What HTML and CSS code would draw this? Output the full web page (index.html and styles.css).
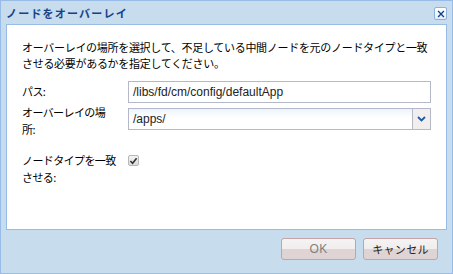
FILE: index.html
```html
<!DOCTYPE html>
<html lang="ja">
<head>
<meta charset="utf-8">
<link rel="stylesheet" href="styles.css">
</head>
<body>
<div class="dialog">
  <div class="titlebar">
    <span class="title">ノードをオーバーレイ</span>
    <span class="close"><svg width="12" height="12" viewBox="0 0 12 12"><path d="M2.5 2.5 L9.5 9.5 M9.5 2.5 L2.5 9.5" stroke="#15428b" stroke-width="1.6" fill="none"/></svg></span>
  </div>
  <div class="panel">
    <p class="desc">オーバーレイの場所を選択して、不足している中間ノードを元のノードタイプと一致させる必要があるかを指定してください。</p>
    <div class="form">
      <label class="lbl">パス:</label>
      <div class="field"><div class="input">/libs/fd/cm/config/defaultApp</div></div>
      <label class="lbl lbl-multi">オーバーレイの場<br>所:</label>
      <div class="field"><div class="combo"><span class="combo-text">/apps/</span><span class="trigger"><svg width="9" height="6" viewBox="0 0 9 6"><path d="M1 1 L4.5 4.5 L8 1" stroke="#1f5aa8" stroke-width="1.8" fill="none"/></svg></span></div></div>
      <label class="lbl lbl-check">ノードタイプを一致<br>させる:</label>
      <div class="field"><span class="check"><svg width="10" height="9" viewBox="0 0 10 9"><path d="M1.5 4.5 L4 7 L8.5 1.5" stroke="#333" stroke-width="1.8" fill="none"/></svg></span></div>
    </div>
  </div>
  <div class="footer">
    <button class="btn btn-disabled">OK</button>
    <button class="btn">キャンセル</button>
  </div>
</div>
</body>
</html>
```
FILE: styles.css
```css
html, body {
  margin: 0;
  padding: 0;
  background: #ffffff;
}
.dialog {
  width: 453px;
  height: 274px;
  box-sizing: border-box;
  border: 1px solid #99bbe8;
  background: #c7dcec;
  display: flex;
  flex-direction: column;
  font-family: "Noto Sans CJK JP", "Noto Sans", sans-serif;
}
.titlebar {
  height: 23px;
  display: flex;
  align-items: center;
  justify-content: space-between;
  padding: 0 5px 0 5px;
}
.title {
  font-size: 11px;
  font-weight: bold;
  color: #15428b;
  letter-spacing: 1.2px;
  margin-top: 1px;
}
.close {
  width: 13px;
  height: 13px;
  box-sizing: border-box;
  border: 1px solid #8fb0d8;
  border-radius: 2px;
  background: linear-gradient(#ffffff, #e3eef8);
  display: flex;
  align-items: center;
  justify-content: center;
  margin-top: 2px;
}
.close svg { width: 10px; height: 10px; }
.panel {
  margin: 0 5px;
  height: 206px;
  box-sizing: border-box;
  background: #ffffff;
  border: 1px solid #99bbe8;
  padding: 14px 15px 0 15px;
}
.desc {
  margin: 0;
  font-size: 11px;
  line-height: 16px;
  color: #000;
  letter-spacing: -0.3px;
}
.form {
  margin-top: 10px;
  display: grid;
  grid-template-columns: 106px 1fr;
  row-gap: 5px;
}
.lbl {
  font-size: 11px;
  line-height: 17px;
  color: #000;
  letter-spacing: -0.6px;
  padding-top: 2px;
  white-space: nowrap;
}
.lbl-multi {
  padding-top: 0;
  margin-top: -4px;
}
.lbl-check {
  padding-top: 9px;
}
.field {
  display: flex;
  align-items: flex-start;
}
.input, .combo {
  width: 100%;
  height: 22px;
  box-sizing: border-box;
  border: 1px solid #b5b8c8;
  font-family: "Liberation Sans", Arial, sans-serif;
  font-size: 12px;
  color: #222;
  display: flex;
  align-items: center;
}
.input {
  padding-left: 4px;
  background: #ffffff;
}
.combo {
  background: linear-gradient(#ecf5fb 0px, #ffffff 9px, #ffffff 100%);
}
.combo-text {
  flex: 1;
  padding-left: 4px;
}
.trigger {
  width: 17px;
  height: 20px;
  border-left: 1px solid #b5b8c8;
  background: #f3eeee;
  display: flex;
  align-items: center;
  justify-content: center;
}
.check {
  width: 11px;
  height: 11px;
  margin-top: 12px;
  box-sizing: border-box;
  border: 1px solid #b8b8b8;
  border-radius: 2px;
  background: linear-gradient(#f4f4f4, #dcdcdc);
  display: flex;
  align-items: center;
  justify-content: center;
}
.check svg { width: 9px; height: 8px; }
.footer {
  display: flex;
  justify-content: flex-end;
  gap: 7px;
  padding: 8px 14px 0 0;
}
.btn {
  width: 75px;
  height: 22px;
  box-sizing: border-box;
  border: 1px solid #c3a3a5;
  border-radius: 3px;
  background: linear-gradient(#f5f3f3 0%, #f1eded 50%, #e0d3d3 50%, #e0d3d3 100%);
  font-family: "Noto Sans CJK JP", "Noto Sans", sans-serif;
  font-size: 11px;
  color: #222;
  padding: 0;
  letter-spacing: 0.3px;
}
.btn-disabled {
  color: #808080;
  font-family: "Liberation Sans", Arial, sans-serif;
  font-size: 12px;
}
```
